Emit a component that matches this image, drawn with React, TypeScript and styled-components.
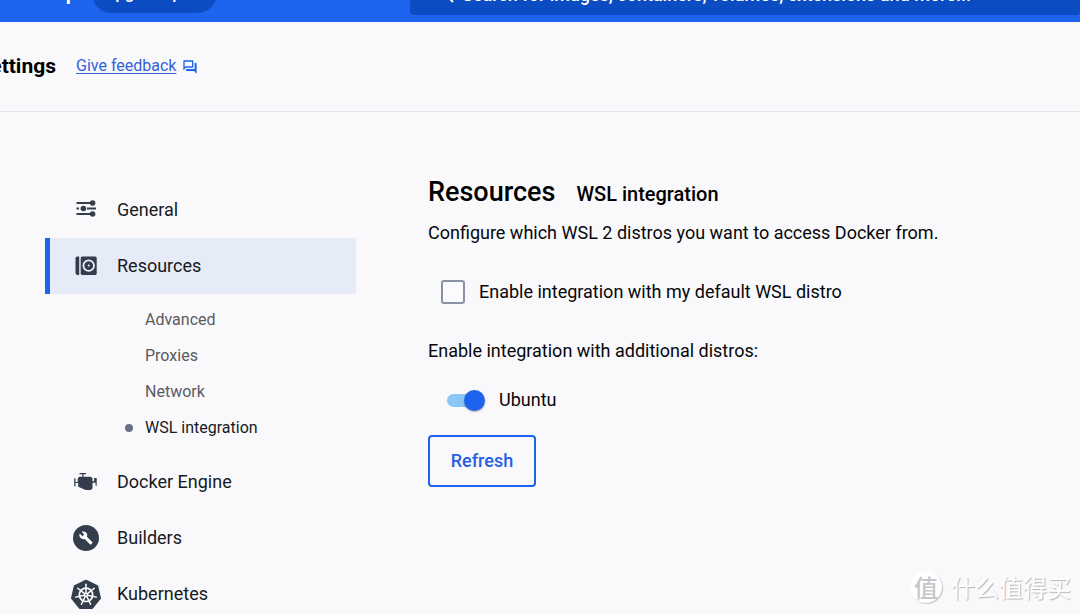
import React, { useState } from "react";
import styled, { createGlobalStyle } from "styled-components";

const ink = "#343d4b";
const blue = "#1d63ed";
const deepBlue = "#0b4cc2";

const GlobalStyle = createGlobalStyle`
  * { box-sizing: border-box; }
  body {
    margin: 0;
    background: #f9f9fc;
    color: #060709;
    font-family: Roboto, "Liberation Sans", sans-serif;
    font-size: 18px;
    line-height: 28px;
  }
`;

const Shell = styled.div`
  height: 100vh;
  overflow: hidden;
  display: flex;
  flex-direction: column;
`;

const TopBar = styled.header`
  flex: none;
  display: flex;
  align-items: flex-end;
  height: 22px;
  overflow: hidden;
  background: ${blue};
  color: #ffffff;
`;

const Brand = styled.div`
  flex: none;
  display: flex;
  justify-content: flex-end;
  width: 77px;
  margin-right: 15px;
  padding-bottom: 15px;
  font-size: 20px;
  font-weight: 700;
  white-space: nowrap;
`;

const UpgradeButton = styled.button`
  flex: none;
  width: 125px;
  height: 40px;
  margin-bottom: 9px;
  padding: 0;
  border: 0;
  border-radius: 20px;
  background: ${deepBlue};
  color: #ffffff;
  font: 500 17px/24px Roboto, sans-serif;
`;

const SearchBox = styled.label`
  flex: 1;
  display: flex;
  align-items: center;
  gap: 8px;
  height: 44px;
  margin: 0 0 7px 193px;
  padding: 4px 24px 0 27px;
  border-radius: 4px;
  background: ${deepBlue};
`;

const SearchInput = styled.input`
  flex: 1;
  min-width: 0;
  padding: 0;
  border: 0;
  outline: 0;
  background: transparent;
  color: #ffffff;
  font: 500 18px/24px Roboto, sans-serif;
  &::placeholder { color: #ffffff; opacity: 1; }
`;

const PageHeader = styled.div`
  flex: none;
  display: flex;
  align-items: center;
  height: 90px;
  padding-bottom: 2px;
  border-bottom: 1px solid #e6e7ec;
`;

const PageTitle = styled.div`
  flex: none;
  display: flex;
  justify-content: flex-end;
  width: 56px;
  margin-right: 20px;
  overflow: hidden;
  color: #000000;
  font-size: 21px;
  font-weight: 700;
`;

const FeedbackLink = styled.a`
  display: flex;
  align-items: center;
  gap: 6px;
  color: #3560d8;
  font-size: 16px;
  line-height: 24px;
  text-decoration: none;
  svg { margin-top: 2px; }
`;

const LinkText = styled.span`
  text-decoration: underline;
  text-underline-offset: 2px;
`;

const Body = styled.div`
  flex: 1;
  display: flex;
  align-items: flex-start;
  gap: 72px;
  padding: 70px 45px 0;
`;

const Nav = styled.nav`
  flex: none;
  width: 311px;
`;

const NavLink = styled.a<{ $active?: boolean }>`
  display: flex;
  align-items: center;
  gap: 15px;
  height: 56px;
  padding-left: 20px;
  border-left: 5px solid ${(p) => (p.$active ? blue : "transparent")};
  background: ${(p) => (p.$active ? "#e5ecf8" : "transparent")};
  color: #17191e;
  text-decoration: none;
`;

const SubList = styled.ul`
  margin: 0;
  padding: 8px 0 8px 80px;
  list-style: none;
`;

const SubLink = styled.a<{ $active?: boolean }>`
  display: flex;
  align-items: center;
  gap: 12px;
  height: 36px;
  color: ${(p) => (p.$active ? "#17191e" : "#595b60")};
  font-size: 16px;
  text-decoration: none;
  &::before {
    content: "";
    width: 8px;
    height: 8px;
    border-radius: 50%;
    background: ${(p) => (p.$active ? "#677285" : "transparent")};
  }
`;

const Content = styled.main`
  flex: 1;
  display: flex;
  flex-direction: column;
  align-items: flex-start;
  gap: 21px;
  padding-bottom: 24px;
`;

const Intro = styled.div`
  margin-top: -8px;
`;

const Heading = styled.div`
  display: flex;
  align-items: baseline;
  gap: 21px;
  margin-bottom: 9px;
  color: #000000;
`;

const Title = styled.h1`
  margin: 0;
  font-size: 27px;
  font-weight: 500;
  line-height: 36px;
`;

const Subtitle = styled.h2`
  margin: 0;
  font-size: 20px;
  font-weight: 500;
  line-height: 28px;
`;

const Text = styled.p`
  margin: 0;
`;

const Option = styled.label`
  display: flex;
  align-items: center;
  gap: 14px;
  min-height: 28px;
`;

const CheckOption = styled(Option)`
  padding: 10px 0 10px 13px;
`;

const SwitchOption = styled(Option)`
  padding-left: 19px;
`;

const Checkbox = styled.input`
  appearance: none;
  width: 24px;
  height: 24px;
  margin: 0;
  border: 2px solid #8993a5;
  border-radius: 3px;
  background: #fbfbfd;
  &:checked { background: ${blue}; border-color: ${blue}; }
`;

const Switch = styled.input`
  appearance: none;
  display: grid;
  align-items: center;
  width: 38px;
  height: 22px;
  margin: 0;
  &::before, &::after { content: ""; grid-area: 1 / 1; }
  &::before {
    width: 34px;
    height: 13px;
    border-radius: 7px;
    background: #c4c8d1;
  }
  &::after {
    width: 21px;
    height: 21px;
    border-radius: 50%;
    background: #ffffff;
    box-shadow: 0 1px 2px rgba(0, 0, 0, 0.3);
  }
  &:checked::before { background: #8bc7f5; }
  &:checked::after { justify-self: end; background: ${blue}; }
`;

const RefreshButton = styled.button`
  width: 108px;
  height: 52px;
  padding: 0;
  border: 2px solid ${blue};
  border-radius: 4px;
  background: transparent;
  color: #2560e0;
  font: 500 18px/28px Roboto, sans-serif;
`;

const Watermark = styled.div`
  position: absolute;
  right: 9px;
  bottom: 11px;
  display: flex;
  align-items: center;
  gap: 9px;
  color: #ffffff;
  font-family: "Noto Sans CJK SC", sans-serif;
  font-size: 24px;
  line-height: 32px;
  text-shadow: 1px 1px 1px #b4b4b8;
  pointer-events: none;
`;

const Seal = styled.span`
  display: grid;
  place-items: center;
  width: 32px;
  height: 32px;
  border-radius: 50%;
  background: #ffffff;
  box-shadow: 1px 1px 1px #c4c4c8;
  color: #c6c6c9;
  font-weight: 500;
  text-shadow: none;
`;

const SearchIcon = () => (
  <svg width="17" height="18" viewBox="0 0 17 18" fill="none" stroke="#fff" strokeWidth="2" aria-hidden="true">
    <circle cx="7" cy="7" r="5" />
    <path d="M10.500 10.500 16 16" />
  </svg>
);

const ChatIcon = () => (
  <svg width="16" height="16" viewBox="0 0 24 24" fill={blue} aria-hidden="true">
    <path d="M15 4v7H5.170L4 12.170V4h11m1-2H3c-.55 0-1 .45-1 1v14l4-4h10c.55 0 1-.45 1-1V3c0-.55-.45-1-1-1zm5 4h-2v9H6v2c0 .55.45 1 1 1h11l4 4V7c0-.55-.45-1-1-1z" />
  </svg>
);

const SlidersIcon = () => (
  <svg width="32" height="32" viewBox="0 0 32 32" fill={ink} stroke={ink} aria-hidden="true">
    <path d="M6.500 9H20M6.500 14.500H9M17 14.500h9M6.500 20H20" strokeWidth="1.800" />
    <g stroke="none">
      <circle cx="22.600" cy="9" r="2.800" />
      <circle cx="13.400" cy="14.500" r="2.800" />
      <circle cx="22.600" cy="20" r="2.800" />
    </g>
  </svg>
);

const DriveIcon = () => (
  <svg width="32" height="32" viewBox="0 0 32 32" fill={ink} aria-hidden="true">
    <path d="M9.200 6.500v18.400H7.300a1.800 1.800 0 0 1-1.800-1.800V8.300a1.800 1.800 0 0 1 1.800-1.800z" />
    <rect x="10.700" y="6.500" width="16" height="18.400" rx="1.600" />
    <circle cx="18.700" cy="15.600" r="5.300" fill="none" stroke="#eef2fa" strokeWidth="1.700" />
    <circle cx="18.700" cy="15.600" r="1" fill="#eef2fa" />
  </svg>
);

const EngineIcon = () => (
  <svg width="32" height="32" viewBox="0 0 32 32" fill={ink} aria-hidden="true">
    <path d="M9.500 7h6.500v1.200h-2.500v2.600h7.500l1.500 1.500v3h1.600v-3.300h2.600v7.800h-1.100v-3h-3.100v5.400l-1.700 1.800h-5.200l-7.400-3.300v-3.600H5.500v3.200H4.200v-8h1.300v3.600h2.200v-3.500l1.500-1.600h3.100V8.200H9.500z" />
  </svg>
);

const WrenchIcon = () => (
  <svg width="32" height="32" viewBox="0 0 32 32" aria-hidden="true">
    <circle cx="16" cy="16" r="13" fill={ink} />
    <path
      transform="translate(8.800 8.800) scale(.6)"
      fill="#fff"
      d="M22.700 19l-9.100-9.100c.9-2.300.4-5-1.500-6.900-2-2-5-2.400-7.400-1.300L9 6 6 9 1.600 4.700C.4 7.100.9 10.100 2.900 12.100c1.900 1.900 4.600 2.400 6.900 1.500l9.100 9.100c.4.4 1 .4 1.400 0l2.300-2.300c.5-.4.5-1.100.1-1.400z"
    />
  </svg>
);

const spokes = [0, 1, 2, 3, 4, 5, 6].map((n) => (n * 360) / 7);

const HelmIcon = () => (
  <svg width="32" height="32" viewBox="0 0 32 32" fill="none" aria-hidden="true">
    <path
      d="M16 2.700 27.200 8.100 30 20.200 22.200 29.900H9.800L2 20.200 4.800 8.100z"
      fill={ink}
      stroke={ink}
      strokeWidth="2"
      strokeLinejoin="round"
    />
    <circle cx="16" cy="16.800" r="6.700" stroke="#fff" strokeWidth="1.700" />
    {spokes.map((angle) => (
      <path key={angle} transform={`rotate(${angle} 16 16.800)`} d="M16 15V6.300" stroke="#fff" strokeWidth="1.500" strokeLinecap="round" />
    ))}
    <circle cx="16" cy="16.800" r="2" fill="#fff" />
    <circle cx="16" cy="16.800" r=".8" fill={ink} />
  </svg>
);

const subPages = ["Advanced", "Proxies", "Network", "WSL integration"];

export default function App() {
  const [useDefault, setUseDefault] = useState(false);
  const [ubuntu, setUbuntu] = useState(true);

  return (
    <Shell>
      <GlobalStyle />
      <TopBar>
        <Brand>Docker Desktop</Brand>
        <UpgradeButton type="button">Upgrade plan</UpgradeButton>
        <SearchBox>
          <SearchIcon />
          <SearchInput
            type="text"
            aria-label="Search"
            placeholder="Search for images, containers, volumes, extensions and more..."
          />
        </SearchBox>
      </TopBar>
      <PageHeader>
        <PageTitle>Settings</PageTitle>
        <FeedbackLink href="#feedback">
          <LinkText>Give feedback</LinkText>
          <ChatIcon />
        </FeedbackLink>
      </PageHeader>
      <Body>
        <Nav aria-label="Settings">
          <NavLink href="#general"><SlidersIcon />General</NavLink>
          <NavLink href="#resources" $active><DriveIcon />Resources</NavLink>
          <SubList>
            {subPages.map((name) => (
              <li key={name}>
                <SubLink href="#resources" $active={name === "WSL integration"}>{name}</SubLink>
              </li>
            ))}
          </SubList>
          <NavLink href="#engine"><EngineIcon />Docker Engine</NavLink>
          <NavLink href="#builders"><WrenchIcon />Builders</NavLink>
          <NavLink href="#kubernetes"><HelmIcon />Kubernetes</NavLink>
        </Nav>
        <Content>
          <Intro>
            <Heading>
              <Title>Resources</Title>
              <Subtitle>WSL integration</Subtitle>
            </Heading>
            <Text>Configure which WSL 2 distros you want to access Docker from.</Text>
          </Intro>
          <CheckOption>
            <Checkbox type="checkbox" checked={useDefault} onChange={(e) => setUseDefault(e.target.checked)} />
            Enable integration with my default WSL distro
          </CheckOption>
          <Text>Enable integration with additional distros:</Text>
          <SwitchOption>
            <Switch type="checkbox" role="switch" checked={ubuntu} onChange={(e) => setUbuntu(e.target.checked)} />
            Ubuntu
          </SwitchOption>
          <RefreshButton type="button">Refresh</RefreshButton>
        </Content>
      </Body>
      <Watermark>
        <Seal>值</Seal>
        什么值得买
      </Watermark>
    </Shell>
  );
}
